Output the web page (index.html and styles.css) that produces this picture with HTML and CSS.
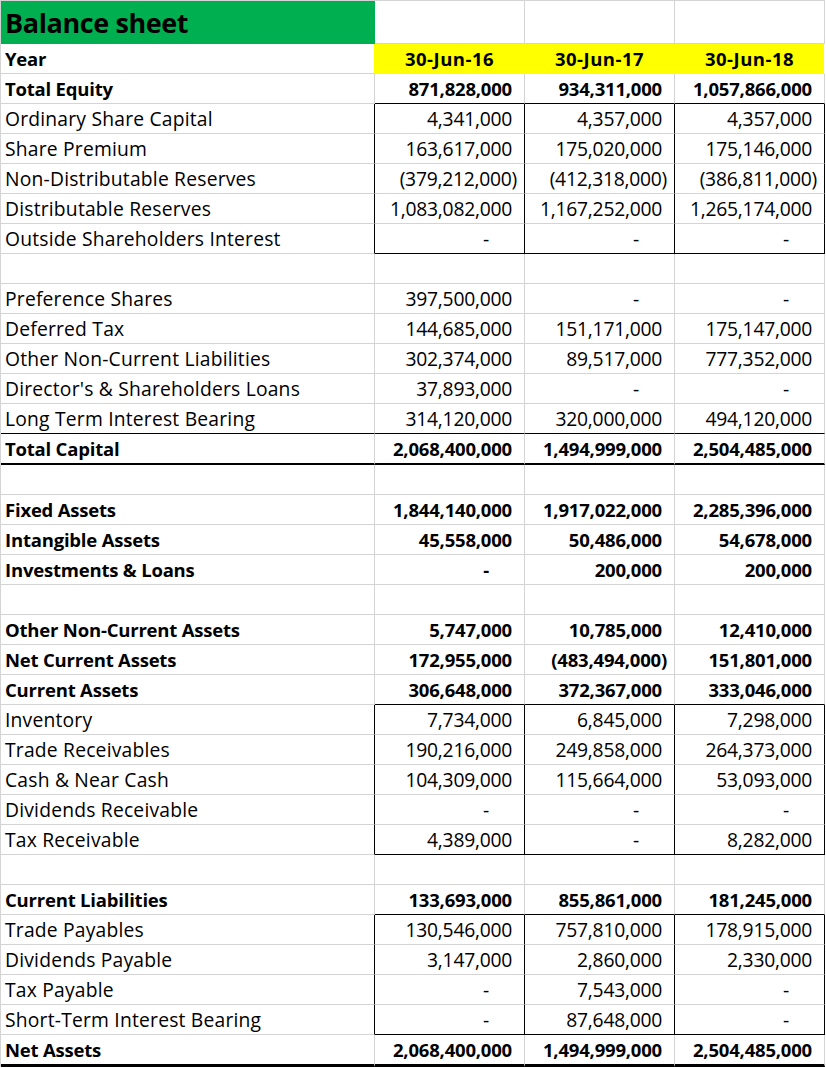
FILE: index.html
```html
<!DOCTYPE html>
<html>
<head>
<meta charset="utf-8">
<link rel="stylesheet" href="styles.css">
</head>
<body>
<table class="sheet">
  <colgroup><col class="c0"><col class="c1"><col class="c2"><col class="c3"></colgroup>
  <tr class="title"><td class="ttl">Balance sheet</td><td></td><td></td><td></td></tr>
  <tr class="b year"><td>Year</td><td class="h">30-Jun-16</td><td class="h">30-Jun-17</td><td class="h last">30-Jun-18</td></tr>
  <tr class="b boxtop"><td>Total Equity</td><td class="n">871,828,000</td><td class="n">934,311,000</td><td class="n">1,057,866,000</td></tr>
  <tr class="box"><td>Ordinary Share Capital</td><td class="n">4,341,000</td><td class="n">4,357,000</td><td class="n">4,357,000</td></tr>
  <tr class="box"><td>Share Premium</td><td class="n">163,617,000</td><td class="n">175,020,000</td><td class="n">175,146,000</td></tr>
  <tr class="box"><td>Non-Distributable Reserves</td><td class="n neg">(379,212,000)</td><td class="n neg">(412,318,000)</td><td class="n neg">(386,811,000)</td></tr>
  <tr class="box"><td>Distributable Reserves</td><td class="n">1,083,082,000</td><td class="n">1,167,252,000</td><td class="n">1,265,174,000</td></tr>
  <tr class="box boxend"><td>Outside Shareholders Interest</td><td class="n z">-</td><td class="n z">-</td><td class="n z">-</td></tr>
  <tr><td></td><td></td><td></td><td></td></tr>
  <tr><td>Preference Shares</td><td class="n">397,500,000</td><td class="n z">-</td><td class="n z">-</td></tr>
  <tr><td>Deferred Tax</td><td class="n">144,685,000</td><td class="n">151,171,000</td><td class="n">175,147,000</td></tr>
  <tr><td>Other Non-Current Liabilities</td><td class="n">302,374,000</td><td class="n">89,517,000</td><td class="n">777,352,000</td></tr>
  <tr><td>Director's &amp; Shareholders Loans</td><td class="n">37,893,000</td><td class="n z">-</td><td class="n z">-</td></tr>
  <tr class="rule"><td>Long Term Interest Bearing</td><td class="n">314,120,000</td><td class="n">320,000,000</td><td class="n">494,120,000</td></tr>
  <tr class="b thick"><td>Total Capital</td><td class="n">2,068,400,000</td><td class="n">1,494,999,000</td><td class="n">2,504,485,000</td></tr>
  <tr><td></td><td></td><td></td><td></td></tr>
  <tr class="b"><td>Fixed Assets</td><td class="n">1,844,140,000</td><td class="n">1,917,022,000</td><td class="n">2,285,396,000</td></tr>
  <tr class="b"><td>Intangible Assets</td><td class="n">45,558,000</td><td class="n">50,486,000</td><td class="n">54,678,000</td></tr>
  <tr class="b"><td>Investments &amp; Loans</td><td class="n z">-</td><td class="n">200,000</td><td class="n">200,000</td></tr>
  <tr><td></td><td></td><td></td><td></td></tr>
  <tr class="b"><td>Other Non-Current Assets</td><td class="n">5,747,000</td><td class="n">10,785,000</td><td class="n">12,410,000</td></tr>
  <tr class="b"><td>Net Current Assets</td><td class="n">172,955,000</td><td class="n neg">(483,494,000)</td><td class="n">151,801,000</td></tr>
  <tr class="b boxtop"><td>Current Assets</td><td class="n">306,648,000</td><td class="n">372,367,000</td><td class="n">333,046,000</td></tr>
  <tr class="box"><td>Inventory</td><td class="n">7,734,000</td><td class="n">6,845,000</td><td class="n">7,298,000</td></tr>
  <tr class="box"><td>Trade Receivables</td><td class="n">190,216,000</td><td class="n">249,858,000</td><td class="n">264,373,000</td></tr>
  <tr class="box"><td>Cash &amp; Near Cash</td><td class="n">104,309,000</td><td class="n">115,664,000</td><td class="n">53,093,000</td></tr>
  <tr class="box"><td>Dividends Receivable</td><td class="n z">-</td><td class="n z">-</td><td class="n z">-</td></tr>
  <tr class="box boxend"><td>Tax Receivable</td><td class="n">4,389,000</td><td class="n z">-</td><td class="n">8,282,000</td></tr>
  <tr><td></td><td></td><td></td><td></td></tr>
  <tr class="b boxtop"><td>Current Liabilities</td><td class="n">133,693,000</td><td class="n">855,861,000</td><td class="n">181,245,000</td></tr>
  <tr class="box"><td>Trade Payables</td><td class="n">130,546,000</td><td class="n">757,810,000</td><td class="n">178,915,000</td></tr>
  <tr class="box"><td>Dividends Payable</td><td class="n">3,147,000</td><td class="n">2,860,000</td><td class="n">2,330,000</td></tr>
  <tr class="box"><td>Tax Payable</td><td class="n z">-</td><td class="n">7,543,000</td><td class="n z">-</td></tr>
  <tr class="box boxend"><td>Short-Term Interest Bearing</td><td class="n z">-</td><td class="n">87,648,000</td><td class="n z">-</td></tr>
  <tr class="b end"><td>Net Assets</td><td class="n">2,068,400,000</td><td class="n">1,494,999,000</td><td class="n">2,504,485,000</td></tr>
</table>
</body>
</html>
```

FILE: styles.css
```css
html, body {
  margin: 0;
  padding: 0;
  background: #ffffff;
}

.sheet {
  border-collapse: separate;
  border-spacing: 0;
  table-layout: fixed;
  width: 824px;
  border-top: 1px solid #d4d4d4;
  border-left: 1px solid #d4d4d4;
  font-family: "Open Sans", "Noto Sans", Lato, sans-serif;
  font-size: 19.3px;
  letter-spacing: 0.2px;
  color: #000000;
}

.c0 { width: 374px; }
.c1 { width: 150px; }
.c2 { width: 150px; }
.c3 { width: 150px; }

.sheet td {
  box-sizing: border-box;
  height: 30px;
  padding: 1px 0 0 4px;
  border-right: 1px solid #d4d4d4;
  border-bottom: 1px solid #d4d4d4;
  white-space: nowrap;
  overflow: hidden;
  vertical-align: middle;
  line-height: 22px;
}

.title td { height: 43px; }

.title .ttl {
  background: #00b050;
  border-right-color: #00b050;
  border-bottom-color: #00b050;
  font-weight: bold;
  font-size: 27px;
  letter-spacing: -0.4px;
  line-height: 30px;
  padding-top: 2px;
}

.b td {
  font-weight: bold;
  font-size: 18.5px;
  letter-spacing: -0.2px;
}

.year .h {
  background: #ffff00;
  border-right-color: #ffff00;
  border-bottom-color: #ffff00;
  text-align: center;
  padding-left: 0;
  letter-spacing: 0.5px;
}
.year td:first-child { border-right-color: #ffff00; }
.year .h.last { border-right-color: #ffffff; }

.sheet td.n {
  text-align: right;
  padding: 1px 12px 0 0;
  letter-spacing: -0.25px;
}
.b td.n { letter-spacing: -0.2px; }
.sheet td.n.neg { padding-right: 7px; }
.sheet td.n.z { padding-right: 35px; }

.boxtop td.n { border-bottom-color: #000000; }
.box td { border-right-color: #000000; }
.boxend td.n { border-bottom-color: #000000; }

.rule td { border-bottom-color: #000000; }
.thick td { border-bottom: 2px solid #000000; height: 31px; }
.end td { border-bottom: 3px solid #000000; height: 32px; }
```
